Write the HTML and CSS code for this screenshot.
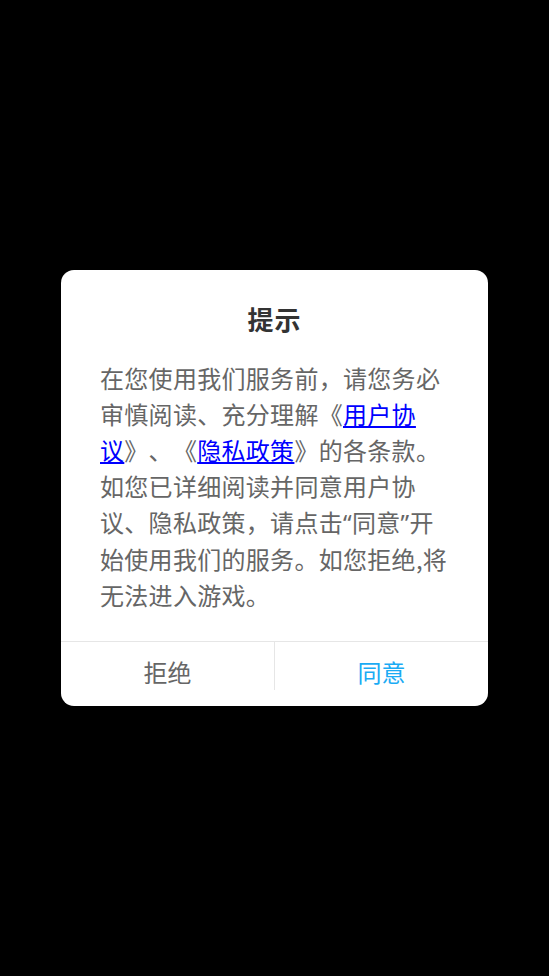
FILE: index.html
```html
<!DOCTYPE html>
<html lang="zh">
<head>
<meta charset="utf-8">
<link rel="stylesheet" href="styles.css">
</head>
<body>
<div class="screen">
  <div class="dialog">
    <div class="title">提示</div>
    <div class="content">在您使用我们服务前，请您务必审慎阅读、充分理解《<a href="#">用户协议</a>》、《<a href="#">隐私政策</a>》的各条款。如您已详细阅读并同意用户协议、隐私政策，请点击<span class="q">“</span>同意<span class="q">”</span>开始使用我们的服务。如您拒绝,将无法进入游戏。</div>
    <div class="footer">
      <div class="btn reject">拒绝</div>
      <div class="sep"></div>
      <div class="btn agree">同意</div>
    </div>
  </div>
</div>
</body>
</html>
```
FILE: styles.css
```css
html, body {
  margin: 0;
  padding: 0;
  background: #000;
}
body {
  font-family: "Noto Sans CJK SC", "Noto Sans", sans-serif;
}
.screen {
  width: 549px;
  height: 976px;
  display: flex;
  align-items: center;
  justify-content: center;
}
.dialog {
  width: 427px;
  background: #fff;
  border-radius: 13px;
  overflow: hidden;
}
.title {
  text-align: center;
  font-size: 26px;
  font-weight: bold;
  color: #333;
  line-height: 30px;
  padding-top: 34px;
  letter-spacing: 1px;
}
.content {
  padding: 26px 38px 28px 39px;
  font-size: 24px;
  line-height: 36px;
  color: #666;
  letter-spacing: 0.3px;
  text-spacing-trim: space-all;
  font-feature-settings: "halt" 0, "chws" 0;
}
.content .q {
  font-family: "Noto Sans", sans-serif;
}
.content a {
  color: #0000ff;
  text-decoration: underline;
}
.footer {
  display: flex;
  border-top: 1px solid #e6e6e6;
  height: 64px;
  align-items: flex-start;
}
.btn {
  flex: 1;
  text-align: center;
  font-size: 24px;
  line-height: 60px;
  height: 64px;
}
.reject {
  color: #666;
}
.agree {
  color: #1aabf4;
}
.sep {
  width: 1px;
  height: 48px;
  background: #e6e6e6;
}
```
